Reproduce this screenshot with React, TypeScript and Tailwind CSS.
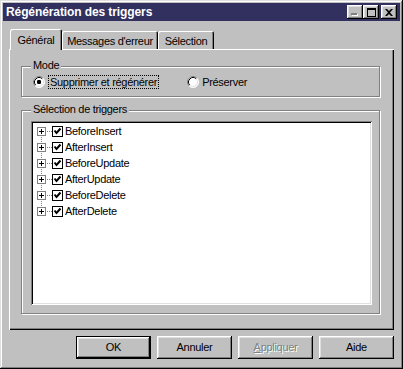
import React from "react";

const raised =
  "shadow-[inset_-1px_-1px_0_#000,inset_1px_1px_0_#fff,inset_-2px_-2px_0_#808080,inset_2px_2px_0_#dfdfdf]";

const triggers = ["BeforeInsert", "AfterInsert", "BeforeUpdate", "AfterUpdate", "BeforeDelete", "AfterDelete"];

function Radio({ checked }: { checked: boolean }) {
  return (
    <svg width="12" height="12" viewBox="0 0 12 12" className="shrink-0">
      <circle cx="6" cy="6" r="5.5" fill="#fff" />
      <path d="M2.11 9.89 A5.5 5.5 0 0 1 9.89 2.11" fill="none" stroke="#808080" />
      <path d="M9.89 2.11 A5.5 5.5 0 0 1 2.11 9.89" fill="none" stroke="#fff" />
      <path d="M2.82 9.18 A4.5 4.5 0 0 1 9.18 2.82" fill="none" stroke="#000" />
      <path d="M9.18 2.82 A4.5 4.5 0 0 1 2.82 9.18" fill="none" stroke="#dfdfdf" />
      {checked && <rect x="4" y="4" width="4" height="4" rx="1.2" fill="#000" />}
    </svg>
  );
}

function TreeGlyph({ first, last }: { first: boolean; last: boolean }) {
  return (
    <svg width="30" height="16" viewBox="0 0 30 16" className="shrink-0">
      {!first && (
        <>
          <rect x="8" y="0" width="1" height="1" fill="#808080" />
          <rect x="8" y="2" width="1" height="1" fill="#808080" />
        </>
      )}
      {!last && <rect x="8" y="14" width="1" height="1" fill="#808080" />}
      {[14, 16, 18].map((x) => (
        <rect key={x} x={x} y="8" width="1" height="1" fill="#808080" />
      ))}
      <rect x="4.5" y="4.5" width="8" height="8" fill="#fff" stroke="#808080" />
      <rect x="6" y="8" width="5" height="1" fill="#000" />
      <rect x="8" y="6" width="1" height="5" fill="#000" />
      <rect x="19.5" y="3.5" width="10" height="10" fill="#fff" stroke="#000" />
      <polyline points="21.5,7.5 23.5,10 27.5,5.5" fill="none" stroke="#000" strokeWidth="2" />
    </svg>
  );
}

function TitleButton({ children, className = "" }: { children: React.ReactNode; className?: string }) {
  return (
    <div className={`w-[16px] h-[14px] bg-[#c0c0c0] flex items-center justify-center ${raised} ${className}`}>
      {children}
    </div>
  );
}

function Button({ label, isDefault, disabled }: { label: React.ReactNode; isDefault?: boolean; disabled?: boolean }) {
  return (
    <div
      className={`w-[75px] h-[23px] bg-[#c0c0c0] flex items-center justify-center ${
        isDefault ? "border border-black" : ""
      }`}
    >
      <div
        className={`w-full h-full flex items-center justify-center ${raised} ${
          disabled ? "text-[#808080] [text-shadow:1px_1px_0_#fff]" : "text-black"
        }`}
      >
        {label}
      </div>
    </div>
  );
}

export default function App() {
  return (
    <div className="w-[403px] h-[369px] bg-[#c0c0c0] p-[3px] font-['Liberation_Sans',Arial,sans-serif] text-[11px] tracking-[-0.3px] text-black shadow-[inset_-1px_-1px_0_#000,inset_1px_1px_0_#dfdfdf,inset_-2px_-2px_0_#808080,inset_2px_2px_0_#fff]">
      {/* title bar */}
      <div className="h-[18px] bg-[#31305f] flex items-center pl-[3px] pr-[3px]">
        <span className="text-white font-bold text-[12px] leading-none tracking-[-0.1px]">Régénération des triggers</span>
        <div className="ml-auto flex items-center">
          <TitleButton>
            <svg width="8" height="9" viewBox="0 0 8 9">
              <rect x="1" y="6" width="6" height="2" fill="#fff" />
              <rect x="0" y="5" width="6" height="2" fill="#808080" />
            </svg>
          </TitleButton>
          <TitleButton>
            <svg width="9" height="9" viewBox="0 0 9 9">
              <rect x="0.5" y="0.5" width="8" height="8" fill="none" stroke="#000" />
              <rect x="0" y="1" width="9" height="1" fill="#000" />
            </svg>
          </TitleButton>
          <TitleButton className="ml-[2px]">
            <svg width="8" height="7" viewBox="0 0 8 7">
              <path d="M0 0h2l2 2 2-2h2L5 3.5 8 7H6L4 5 2 7H0l3-3.5z" fill="#000" />
            </svg>
          </TitleButton>
        </div>
      </div>

      <div className="px-[6px] mt-[8px]">
        {/* tabs */}
        <div className="flex items-end h-[20px] pl-[1px]">
          <div className="relative z-10 -mb-[1px] w-[52px] h-[21px] bg-[#c0c0c0] rounded-t-[2px] flex items-start justify-center pt-[3px] shadow-[inset_1px_1px_0_#fff,inset_-1px_0_0_#000,inset_-2px_0_0_#808080]">
            Général
          </div>
          <div className="w-[96px] h-[18px] rounded-t-[2px] flex items-start justify-center pt-[2px] shadow-[inset_1px_1px_0_#fff,inset_-1px_0_0_#000,inset_-2px_0_0_#808080]">
            Messages d'erreur
          </div>
          <div className="w-[56px] h-[18px] rounded-t-[2px] flex items-start justify-center pt-[2px] shadow-[inset_1px_1px_0_#fff,inset_-1px_0_0_#000,inset_-2px_0_0_#808080]">
            Sélection
          </div>
        </div>

        {/* panel */}
        <div className="h-[281px] pt-[17px] pl-[12px] shadow-[inset_1px_1px_0_#fff,inset_-1px_-1px_0_#000,inset_-2px_-2px_0_#808080]">
          <div className="relative w-[359px] h-[31px] border border-[#808080] shadow-[1px_1px_0_#fff,inset_1px_1px_0_#fff] flex items-center pl-[11px]">
            <span className="absolute -top-[8px] left-[9px] px-[2px] bg-[#c0c0c0] leading-[13px]">Mode</span>
            <Radio checked />
            <span className="ml-[3px] px-[1px] leading-[12px] border border-dotted border-black">Supprimer et régénérer</span>
            <div className="ml-[28px]">
              <Radio checked={false} />
            </div>
            <span className="ml-[3px] leading-[12px]">Préserver</span>
          </div>

          <div className="relative mt-[13px] w-[359px] h-[204px] border border-[#808080] shadow-[1px_1px_0_#fff,inset_1px_1px_0_#fff] pl-[9px] pt-[10px]">
            <span className="absolute -top-[8px] left-[9px] px-[2px] bg-[#c0c0c0] leading-[13px]">
              Sélection de triggers
            </span>
            <div className="w-[341px] h-[184px] bg-white pl-[2px] pt-[2px] shadow-[inset_1px_1px_0_#808080,inset_-1px_-1px_0_#fff,inset_2px_2px_0_#000,inset_-2px_-2px_0_#dfdfdf]">
              {triggers.map((t, i) => (
                <div key={t} className="flex items-center h-[16px]">
                  <TreeGlyph first={i === 0} last={i === triggers.length - 1} />
                  <span className="ml-[2px] leading-[16px]">{t}</span>
                </div>
              ))}
            </div>
          </div>
        </div>

        {/* buttons */}
        <div className="mt-[6px] flex justify-end gap-[6px]">
          <Button label="OK" isDefault />
          <Button label="Annuler" />
          <Button
            label={
              <span>
                <span className="underline">A</span>ppliquer
              </span>
            }
            disabled
          />
          <Button label="Aide" />
        </div>
      </div>
    </div>
  );
}
